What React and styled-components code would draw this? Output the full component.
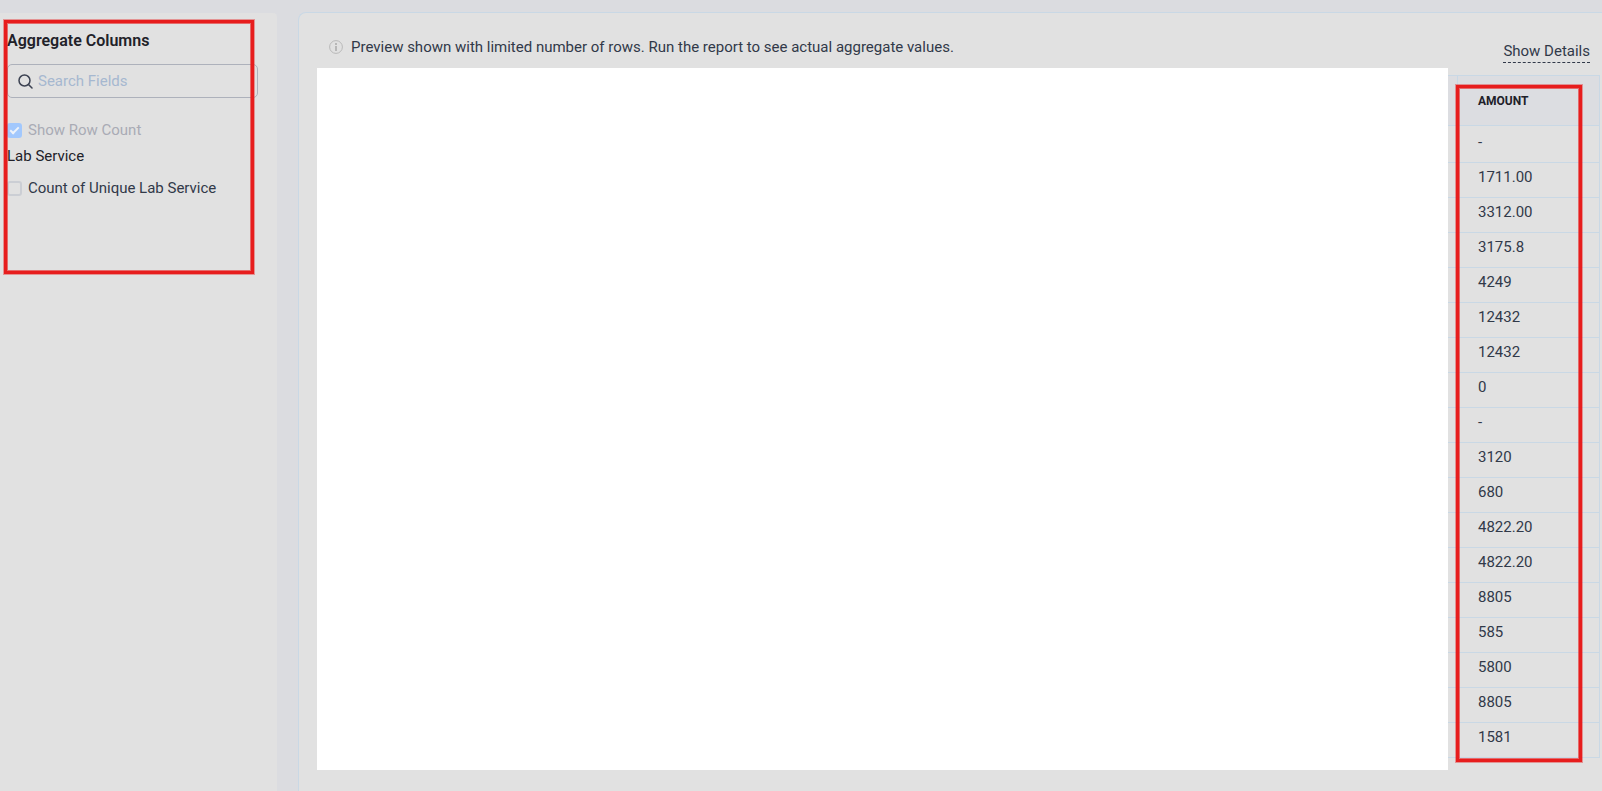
import React from "react";
import styled, { createGlobalStyle } from "styled-components";

const GlobalStyle = createGlobalStyle`
  *, *::before, *::after { box-sizing: border-box; }
  body {
    margin: 0;
    background: #dbdce0;
    color: #313949;
    font-family: Roboto, "Liberation Sans", sans-serif;
    font-size: 15px;
    line-height: 20px;
  }
`;

const Page = styled.div`
  display: flex;
  gap: 21px;
  min-height: 100vh;
  padding-top: 12px;
`;

const Sidebar = styled.aside`
  position: relative;
  flex: 0 0 277px;
  margin-top: 1px;
  padding: 18px 19px 0 7px;
  background: #e1e1e1;
  border-top-right-radius: 4px;
`;

const SidebarTitle = styled.h2`
  margin: 0 0 13px;
  color: #212129;
  font-size: 16px;
  font-weight: 600;
  line-height: 20px;
`;

const SearchBox = styled.label`
  display: flex;
  align-items: center;
  gap: 5px;
  height: 34px;
  padding: 0 10px;
  border: 1px solid #adb1bb;
  border-radius: 5px;
  color: #3c4252;
`;

const SearchInput = styled.input`
  flex: 1;
  min-width: 0;
  padding: 0;
  border: 0;
  outline: 0;
  background: transparent;
  color: #313949;
  font: inherit;
  &::placeholder { color: #a6b8d0; opacity: 1; }
`;

const FieldGroup = styled.fieldset`
  margin: 0;
  padding: 0;
  border: 0;
`;

const GroupTitle = styled.legend`
  margin: 0 0 12px;
  padding: 0;
  color: #212129;
`;

const CheckRow = styled.label`
  display: flex;
  align-items: center;
  gap: 6px;
  margin: ${(p) => (p.$first ? "22px 0 6px" : "0")};
  color: ${(p) => (p.$muted ? "#a9abb5" : "#313949")};
`;

const Checkbox = styled.input`
  appearance: none;
  flex: none;
  width: 15px;
  height: 15px;
  margin: 0;
  border: 2px solid #cbced4;
  border-radius: 3px;
  &:checked {
    border: 0;
    background: #a2c8fd;
  }
  &:checked::after {
    content: "";
    display: block;
    width: 5px;
    height: 9px;
    margin: 2px 5px;
    border: solid #eef3fa;
    border-width: 0 2px 2px 0;
    transform: rotate(45deg);
  }
`;

const Highlight = styled.div`
  position: absolute;
  inset: ${(p) => p.$inset};
  height: ${(p) => p.$height || "auto"};
  border: 3px solid #e71d1d;
  box-shadow: 0 0 0 1px rgba(231, 29, 29, 0.4), inset 0 0 0 1px rgba(231, 29, 29, 0.6);
  pointer-events: none;
`;

const Report = styled.main`
  flex: 1;
  min-width: 0;
  padding: 0 2px 21px 18px;
  border: solid #c9d8e5;
  border-width: 1px 0 0 1px;
  border-top-left-radius: 8px;
  background: #e1e1e1;
`;

const ReportHeader = styled.header`
  display: flex;
  justify-content: space-between;
  align-items: flex-start;
  height: 55px;
  padding: 24px 10px 0 12px;
`;

const Notice = styled.p`
  display: flex;
  align-items: center;
  gap: 8px;
  margin: 0;
`;

const DetailsButton = styled.button`
  margin-top: 4px;
  padding: 0 0 1px;
  border: 0;
  border-bottom: 1px dashed #313949;
  background: none;
  color: inherit;
  font: inherit;
`;

const ReportBody = styled.div`
  display: flex;
`;

const Preview = styled.div`
  flex: 1;
  background: #fff;
`;

const TableArea = styled.div`
  position: relative;
  flex: 0 0 152px;
  padding: 7px 0 12px;
`;

const Table = styled.table`
  width: 100%;
  border-collapse: separate;
  border-spacing: 0;
  border-top: 1px solid #c9d8e5;
  border-right: 1px solid #c9d8e5;
`;

const HeadCell = styled.th`
  height: 50px;
  padding: 0 0 0 20px;
  border-bottom: 1px solid #c9d8e5;
  border-left: 1px solid #c9d8e5;
  background: #dcdde1;
  color: #212129;
  font-size: 12px;
  font-weight: 700;
  text-align: left;
`;

const EdgeCell = styled.td`
  width: 9px;
  padding: 0;
  border-bottom: 1px solid #c9d8e5;
  background: ${(p) => (p.$head ? "#dcdde1" : "transparent")};
`;

const Cell = styled.td`
  height: ${(p) => (p.$first ? 37 : 35)}px;
  padding: 0 0 ${(p) => (p.$first ? 4 : 6)}px 21px;
  border-bottom: 1px solid #c9d8e5;
`;

const amounts = [
  "-", "1711.00", "3312.00", "3175.8", "4249", "12432", "12432", "0", "-",
  "3120", "680", "4822.20", "4822.20", "8805", "585", "5800", "8805", "1581",
];

const SearchIcon = () => (
  <svg width="15" height="15" viewBox="0 0 15 15" fill="none" stroke="currentColor" strokeWidth="1.5" aria-hidden="true">
    <circle cx="6.5" cy="6.5" r="5.5" />
    <path d="M10.5 10.5 14 14" strokeLinecap="round" />
  </svg>
);

const InfoIcon = () => (
  <svg width="14" height="14" viewBox="0 0 14 14" fill="none" aria-hidden="true">
    <circle cx="7" cy="7" r="6.4" stroke="#b9b9b9" />
    <path d="M7 3v2M7 6v5" stroke="#b3b3b3" strokeWidth="1.8" />
  </svg>
);

export default function App() {
  return (
    <>
      <GlobalStyle />
      <Page>
        <Sidebar>
          <SidebarTitle>Aggregate Columns</SidebarTitle>
          <SearchBox>
            <SearchIcon />
            <SearchInput type="search" placeholder="Search Fields" aria-label="Search Fields" />
          </SearchBox>
          <CheckRow $first $muted>
            <Checkbox type="checkbox" defaultChecked disabled />
            Show Row Count
          </CheckRow>
          <FieldGroup>
            <GroupTitle>Lab Service</GroupTitle>
            <CheckRow>
              <Checkbox type="checkbox" />
              Count of Unique Lab Service
            </CheckRow>
          </FieldGroup>
          <Highlight $inset="7px 23px auto 4px" $height="254px" />
        </Sidebar>
        <Report>
          <ReportHeader>
            <Notice>
              <InfoIcon />
              Preview shown with limited number of rows. Run the report to see actual aggregate values.
            </Notice>
            <DetailsButton type="button">Show Details</DetailsButton>
          </ReportHeader>
          <ReportBody>
            <Preview />
            <TableArea>
              <Table>
                <thead>
                  <tr>
                    <EdgeCell $head />
                    <HeadCell scope="col">AMOUNT</HeadCell>
                  </tr>
                </thead>
                <tbody>
                  {amounts.map((amount, i) => (
                    <tr key={i}>
                      <EdgeCell />
                      <Cell $first={i === 0}>{amount}</Cell>
                    </tr>
                  ))}
                </tbody>
              </Table>
              <Highlight $inset="17px 18px 8px 8px" />
            </TableArea>
          </ReportBody>
        </Report>
      </Page>
    </>
  );
}
